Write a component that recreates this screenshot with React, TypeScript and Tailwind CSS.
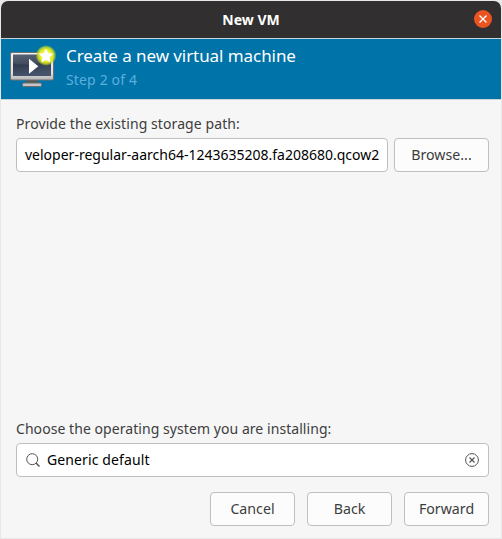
import type { ReactNode } from "react";

function Button({ className, children }: { className: string; children: ReactNode }) {
  return (
    <button
      className={`flex h-[34px] shrink-0 items-center justify-center rounded-[4px] border border-[#bfbfbf] bg-[#fcfcfc] text-[14.2px] leading-5 whitespace-nowrap text-[#3d3d3d] ${className}`}
    >
      {children}
    </button>
  );
}

function MachineIcon() {
  return (
    <svg width="48" height="48" viewBox="0 0 48 48" className="shrink-0">
      <defs>
        <linearGradient id="frame" x1="0" y1="0" x2="0" y2="1">
          <stop offset="0" stopColor="#f4f4f4" />
          <stop offset="0.75" stopColor="#dedede" />
          <stop offset="1" stopColor="#b5b5b5" />
        </linearGradient>
        <linearGradient id="screen" x1="0" y1="0" x2="0.2" y2="1">
          <stop offset="0" stopColor="#4b5769" />
          <stop offset="0.5" stopColor="#303c50" />
          <stop offset="1" stopColor="#46546b" />
        </linearGradient>
        <radialGradient id="glow">
          <stop offset="0" stopColor="#fbff80" />
          <stop offset="0.6" stopColor="#e2ee20" />
          <stop offset="0.8" stopColor="#c7dc22" stopOpacity="0.8" />
          <stop offset="1" stopColor="#b4d020" stopOpacity="0" />
        </radialGradient>
      </defs>
      <path d="M19 34h10v4H19z" fill="#555753" />
      <rect x="14.5" y="38" width="19" height="3.5" rx="1.2" fill="#c4c4c4" stroke="#6f6c6c" />
      <rect x="2.5" y="7.5" width="43" height="27.5" rx="1.5" fill="url(#frame)" stroke="#736f70" />
      <rect x="5" y="9.5" width="38" height="21.5" fill="url(#screen)" />
      <path d="M5 9.5h38V13C32 20 17 21 5 18z" fill="#fff" opacity="0.08" />
      <path d="M21 13.7v15l9.3-7.5z" fill="#fff" />
      <circle cx="38" cy="10.5" r="10.5" fill="url(#glow)" />
      <path
        d="m38 4 2.1 4.2 4.7.7-3.4 3.3.8 4.7-4.2-2.2-4.2 2.2.8-4.7-3.4-3.3 4.7-.7z"
        fill="#fff"
        stroke="#fff"
        strokeLinejoin="round"
        strokeWidth="0.6"
      />
    </svg>
  );
}

export default function App() {
  return (
    <div className="h-[539px] w-[502px] overflow-hidden bg-[#e8e8e8] px-px pt-px font-['Noto_Sans',sans-serif]">
      <main className="flex h-[537px] flex-col overflow-hidden rounded-t-[7px] bg-[#f6f6f6]">
        <header className="grid h-[37px] shrink-0 grid-cols-[1fr_auto_1fr] items-center bg-[#312f30]">
          <h1 className="col-start-2 text-[14px] leading-[21px] font-bold text-white">New VM</h1>
          <button className="mr-[9px] mb-px flex size-[18px] items-center justify-center justify-self-end rounded-full bg-[#e95420]">
            <svg width="8" height="8" viewBox="0 0 8 8" stroke="#fff" strokeWidth="1.4">
              <path d="m.5.5 7 7m0-7-7 7" />
            </svg>
          </button>
        </header>
        <section className="flex h-[62px] shrink-0 items-start border-y border-[#c9d3d8] bg-[#0073a9] pl-[7px]">
          <div className="pt-[6px]">
            <MachineIcon />
          </div>
          <div className="pt-[4px] pl-[10px]">
            <h2 className="text-[17px] leading-[26px] tracking-[-0.07px] text-white">Create a new virtual machine</h2>
            <p className="text-[14px] leading-[22px] tracking-[0.15px] text-[#5ab0dd]">Step 2 of 4</p>
          </div>
        </section>
        <section className="flex flex-1 flex-col pt-[14px] pr-[12px] pb-[12px] pl-[15px]">
          <label className="text-[14px] leading-[20px] tracking-[0.09px] text-[#3d3d3d]">
            Provide the existing storage path:
          </label>
          <div className="mt-[4px] flex gap-[6px]">
            <div className="flex h-[34px] w-[372px] items-center rounded-[4px] border border-[#bfbfbf] bg-white pb-[2px] pl-[8px] text-[14px] whitespace-nowrap text-black">
              <span>veloper-regular-aarch64-1243635208.fa208680.qcow2</span>
            </div>
            <Button className="w-[95px]">Browse...</Button>
          </div>
          <label className="mt-auto text-[14px] leading-[20px] tracking-[0.06px] text-[#3d3d3d]">
            Choose the operating system you are installing:
          </label>
          <div className="mt-[4px] flex h-[34px] shrink-0 items-center rounded-[4px] border border-[#bfbfbf] bg-white px-[9px] text-[14px] text-black">
            <svg width="14" height="14" viewBox="0 0 14 14" fill="none" stroke="#555" strokeWidth="1">
              <circle cx="6.2" cy="6.2" r="5.5" />
              <path d="m10 10 3.5 3.5" strokeWidth="1.5" />
            </svg>
            <span className="ml-[7px] pb-[2px] tracking-[0.12px]">Generic default</span>
            <svg width="14" height="14" viewBox="0 0 14 14" fill="none" stroke="#555" strokeWidth="1" className="ml-auto">
              <circle cx="7" cy="7" r="6.4" />
              <path d="m4.5 4.5 5 5m0-5-5 5" strokeWidth="1.2" />
            </svg>
          </div>
          <div className="mt-[15px] flex justify-end gap-[12px]">
            <Button className="w-[85px]">Cancel</Button>
            <Button className="w-[85px]">Back</Button>
            <Button className="w-[85px]">Forward</Button>
          </div>
        </section>
      </main>
    </div>
  );
}
